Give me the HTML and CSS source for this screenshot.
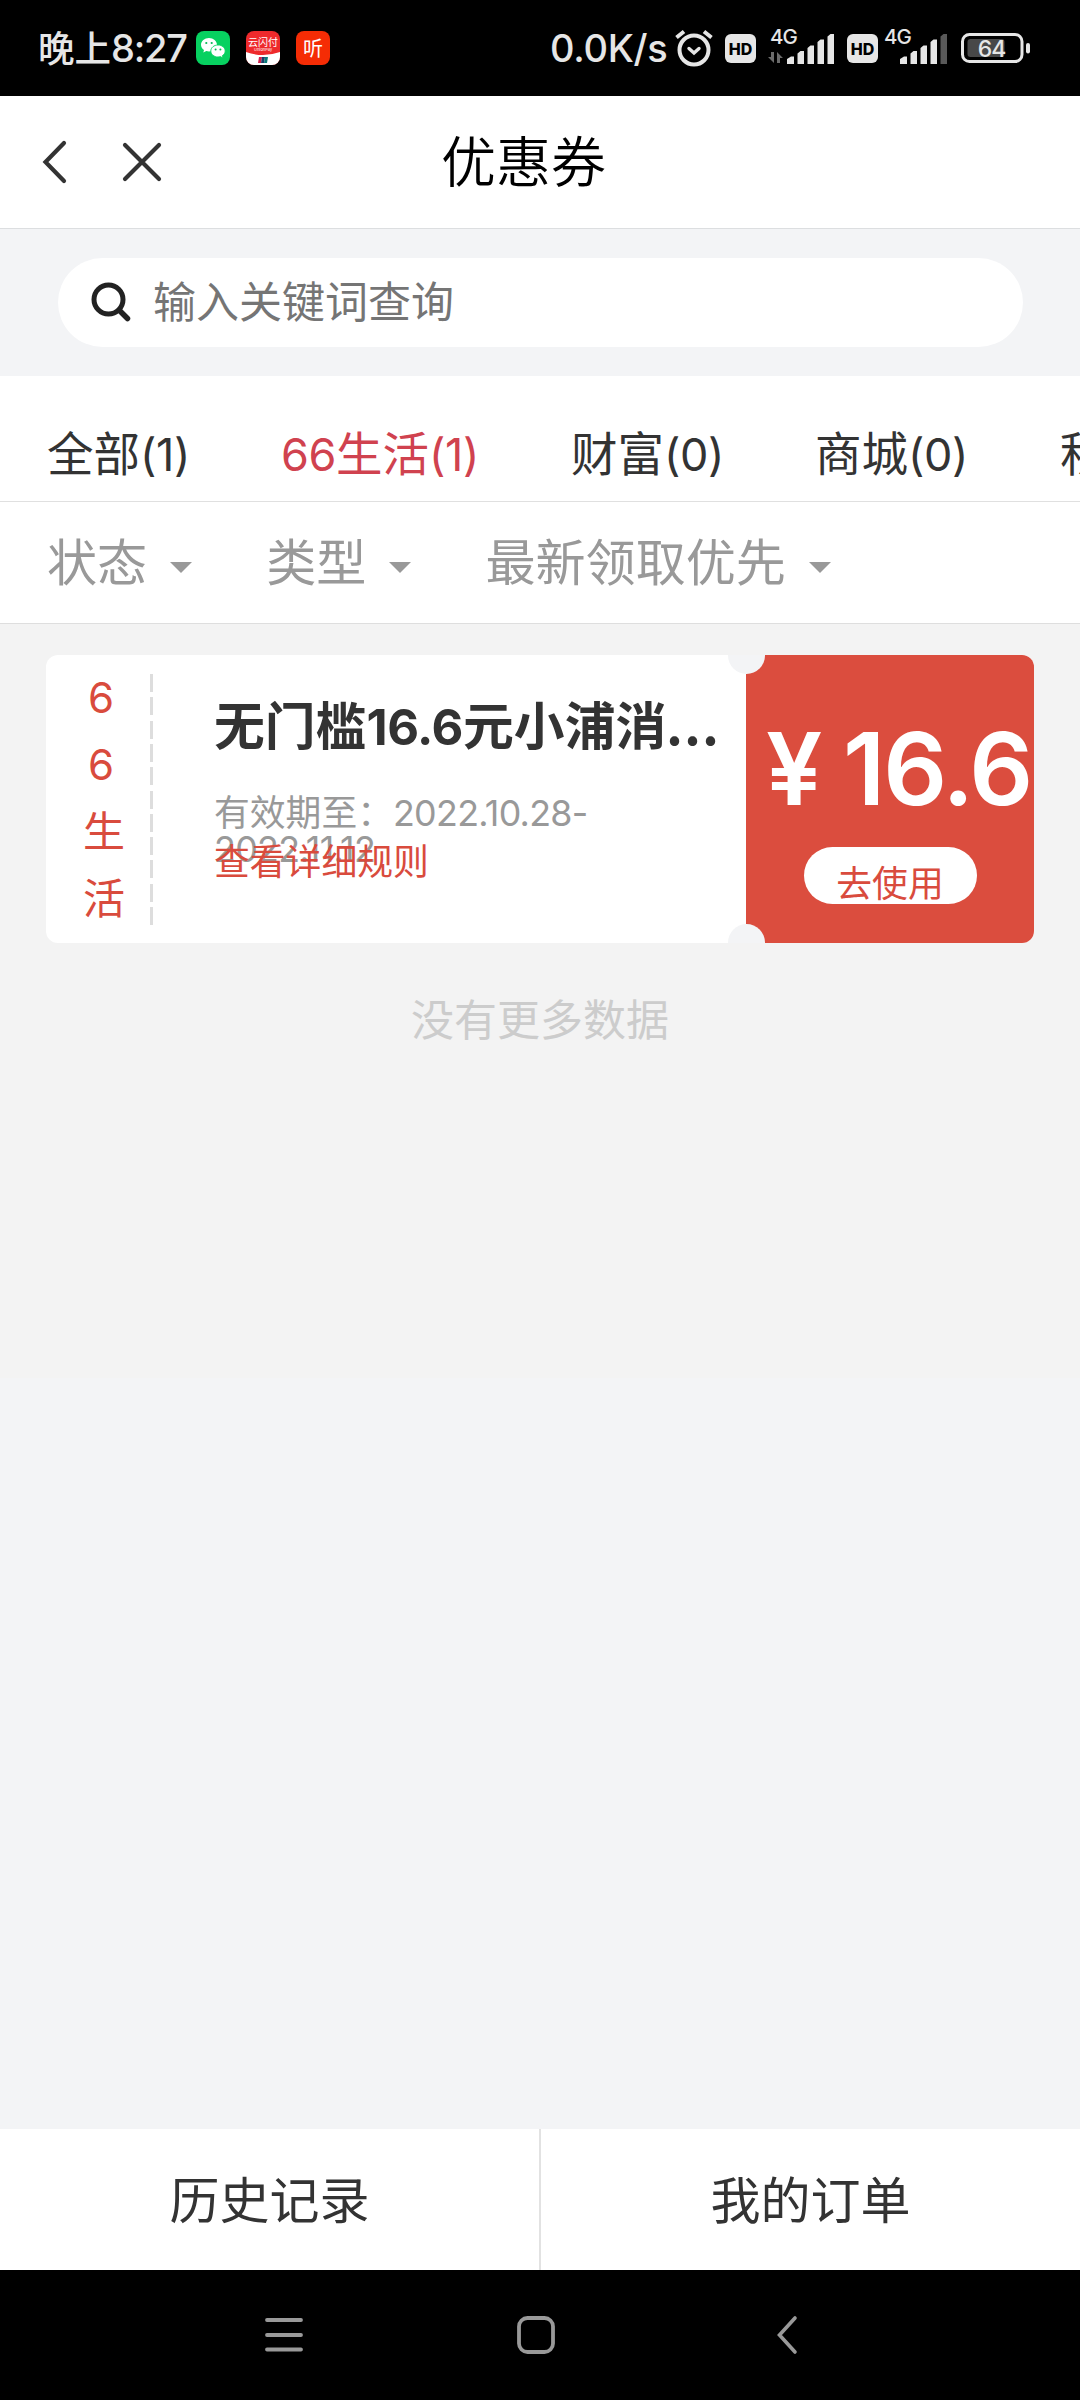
FILE: index.html
```html
<!DOCTYPE html>
<html lang="zh-CN">
<head>
<meta charset="utf-8">
<title>优惠券</title>
<link rel="stylesheet" href="styles.css">
</head>
<body>
<div class="screen">
  <div class="status">
    <span class="clock">晚上<span class="clock-num">8:27</span></span>
    <svg class="app-wechat" width="34" height="34" viewBox="0 0 34 34">
      <rect width="34" height="34" rx="8" fill="#07d160"/>
      <path d="M13 7C8.500 7 5 10 5 13.800c0 2.100 1.200 4 3 5.200l-.7 2.600 3-1.500c.9.200 1.800.4 2.700.4 4.400 0 8-3 8-6.700S17.400 7 13 7z" fill="#fff"/>
      <path d="M22 14c-4 0-7.200 2.700-7.200 6s3.200 6 7.200 6c.8 0 1.600-.1 2.400-.4l2.600 1.400-.6-2.400c1.700-1.100 2.800-2.700 2.800-4.600 0-3.300-3.200-6-7.200-6z" fill="#fff" stroke="#07d160" stroke-width=".9"/>
      <circle cx="10.300" cy="12" r="1.100" fill="#07b955"/><circle cx="15.700" cy="12" r="1.100" fill="#07b955"/>
      <circle cx="19.600" cy="18.500" r="1" fill="#07b955"/><circle cx="24.400" cy="18.500" r="1" fill="#07b955"/>
    </svg>
    <span class="app-pay"><span class="pay-name">云闪付</span><span class="pay-sub">UnionPay</span>
      <svg class="pay-base" width="34" height="13" viewBox="0 0 34 13"><path d="M0 0q17 6 34 0v13H0z" fill="#fff"/><path d="M13 5h3l-1 6h-3z" fill="#d3224c"/><path d="M16 5h3l-1 6h-3z" fill="#1c3d68"/><path d="M19 5h3l-1 6h-3z" fill="#087a79"/></svg>
    </span>
    <span class="app-listen">听</span>
    <span class="speed">0.0K/s</span>
    <svg class="alarm" width="40" height="38" viewBox="0 0 40 38" fill="none" stroke="#e6e6e6" stroke-linecap="round">
      <circle cx="20" cy="21" r="14.500" stroke-width="4"/>
      <path d="M15 19.500l5 4.500 5-4.500" stroke-width="3.400"/>
      <path d="M2.500 8.500l7.500-6M37.500 8.500l-7.500-6" stroke-width="4" stroke-linecap="butt"/>
    </svg>
    <span class="hd hd-one">HD</span>
    <svg class="signal signal-one" width="66" height="38" viewBox="0 0 66 38">
      <text x="1" y="16" class="net">4G</text>
      <path d="M5 24v11L-1 29h3v-5zM8 35V24l6 6h-3v5z" fill="#6b6b6b"/>
      <g fill="#e6e6e6"><path d="M18 31l4-2.500h3V36h-7zM28.500 25.500l3-2.500h3.500v13h-6.500zM38.500 20l3-2.500h3.500V36h-6.500zM48.500 14l3-2.500h3.500V36h-6.500zM58.500 8.500l3-2.500H65v30h-6.500z"/></g>
    </svg>
    <span class="hd hd-two">HD</span>
    <svg class="signal" width="66" height="38" viewBox="0 0 66 38">
      <text x="0" y="16" class="net">4G</text>
      <g fill="#e6e6e6"><path d="M16 31l4-2.500h3V36h-7zM26.500 25.500l3-2.500h3.500v13h-6.500zM36.500 20l3-2.500h3.500V36h-6.500zM46.500 14l3-2.500h3.500V36h-6.500z"/></g>
      <path d="M56.500 8.500l3-2.500H63v30h-6.500z" fill="#595959"/>
    </svg>
    <svg class="battery" width="70" height="30" viewBox="0 0 70 30">
      <rect x="1.500" y="1.500" width="59.500" height="27" rx="7" fill="none" stroke="#e6e6e6" stroke-width="3"/>
      <rect x="6.500" y="6" width="37" height="18" rx="3" fill="#484848"/>
      <rect x="65" y="10" width="4" height="10.500" rx="2" fill="#e6e6e6"/>
      <text x="30.500" y="23.500" text-anchor="middle" class="level">64</text>
    </svg>
  </div>

  <header class="header">
    <svg class="back" width="26" height="44" viewBox="0 0 26 44"><path d="M22 3L3.500 22 22 41" fill="none" stroke="#333" stroke-width="4.200" stroke-linecap="round"/></svg>
    <svg class="close" width="40" height="40" viewBox="0 0 40 40"><path d="M3 3l34 34M37 3L3 37" fill="none" stroke="#333" stroke-width="4.200" stroke-linecap="round"/></svg>
    <h1 class="title">优惠券</h1>
  </header>

  <div class="search-area">
    <div class="search">
      <svg width="40" height="40" viewBox="0 0 40 40" fill="none" stroke="#222" stroke-linecap="round"><circle cx="17.500" cy="16.500" r="14.500" stroke-width="5"/><path d="M28.500 27.500l8 8" stroke-width="5.500"/></svg>
      <span class="search-hint">输入关键词查询</span>
    </div>
  </div>

  <nav class="tabs">
    <span class="tab tab-all">全部<b>(1)</b></span>
    <span class="tab tab-life"><b>66</b>生活<b>(1)</b></span>
    <span class="tab tab-wealth">财富<b>(0)</b></span>
    <span class="tab tab-mall">商城<b>(0)</b></span>
    <span class="tab">积分<b>(0)</b></span>
  </nav>

  <div class="filters">
    <span class="filter">状态<i class="caret"></i></span>
    <span class="filter">类型<i class="caret"></i></span>
    <span class="filter">最新领取优先<i class="caret"></i></span>
  </div>

  <main class="list">
    <article class="coupon">
      <div class="brand"><span class="num">6</span><span class="num">6</span><span class="han">生</span><span>活</span></div>
      <div class="dashes"></div>
      <div class="info">
        <h2 class="name">无门槛<span class="name-num">16.6</span>元小浦消<span class="dots">...</span></h2>
        <p class="date">有效期至：<span class="date-num">2022.10.28-<br>2022.11.12</span></p>
        <a class="rules">查看详细规则</a>
      </div>
      <div class="value">
        <div class="price"><span class="yen">¥</span><span>16.6</span></div>
        <span class="use">去使用</span>
      </div>
      <i class="notch notch-top"></i>
      <i class="notch notch-bottom"></i>
    </article>
    <p class="end">没有更多数据</p>
  </main>
  <div class="rest"></div>

  <footer class="actions">
    <span class="action">历史记录</span>
    <span class="action">我的订单</span>
  </footer>

  <div class="sysnav">
    <svg width="38" height="36" viewBox="0 0 38 36"><path d="M2 3h34M2 18h34M2 32.500h34" stroke="#999" stroke-width="3.800" stroke-linecap="round"/></svg>
    <svg width="38" height="38" viewBox="0 0 38 38"><rect x="2" y="2" width="34" height="34" rx="8.500" fill="none" stroke="#999" stroke-width="3.800"/></svg>
    <svg width="20" height="38" viewBox="0 0 20 38"><path d="M18 2L2.500 19 18 36" fill="none" stroke="#999" stroke-width="3.600" stroke-linecap="round"/></svg>
  </div>
</div>
</body>
</html>
```
FILE: styles.css
```css
* { box-sizing: border-box; }
body, h1, h2, p { margin: 0; font-weight: 400; }
b, i { font-weight: inherit; font-style: normal; }
svg { display: block; flex: none; overflow: visible; }

body {
  background: #f3f4f6;
  color: #333;
  font-family: "Noto Sans CJK SC", sans-serif;
}
.screen {
  width: 1080px;
  height: 2400px;
  display: flex;
  flex-direction: column;
  overflow: hidden;
}
.screen > * { flex: none; }

/* status bar */
.status {
  height: 96px;
  padding-left: 38px;
  background: #000;
  color: #e6e6e6;
  display: flex;
  align-items: center;
  white-space: nowrap;
}
.clock { width: 158px; font-size: 36.5px; font-weight: 500; line-height: 60px; margin-top: -1px; }
.clock-num { font-family: Inter, sans-serif; font-size: 38px; letter-spacing: -1.2px; }
.app-wechat { margin-right: 16px; }
.app-pay, .app-listen {
  width: 34px;
  height: 34px;
  border-radius: 8px;
  overflow: hidden;
  color: #fff;
  flex: none;
}
.app-pay { background: #ee2a2c; display: flex; flex-direction: column; align-items: center; margin-right: 16px; }
.pay-name { font-size: 10px; line-height: 11px; margin-top: 5px; }
.pay-sub { font-size: 4px; line-height: 5px; }
.app-listen { background: #f52c05; font-size: 20px; line-height: 33px; text-align: center; margin-right: 220px; }
.speed { width: 124px; font-family: Inter, sans-serif; font-size: 38px; font-weight: 450; letter-spacing: -0.3px; }
.alarm { margin-right: 11px; }
.hd {
  width: 31px;
  height: 29px;
  border-radius: 6px;
  background: #e6e6e6;
  color: #000;
  font: 800 16px/30px Inter, sans-serif;
  text-align: center;
  flex: none;
}
.hd-one { margin-right: 13px; }
.hd-two { margin-right: 6px; }
.signal { margin-top: -2px; }
.signal-one { margin-right: 12px; }
.net { font: 500 20.500px Inter, sans-serif; fill: #e6e6e6; letter-spacing: -1px; }
.battery { margin-left: 11px; }
.level { font: 500 23px Inter, sans-serif; fill: #e6e6e6; letter-spacing: -1px; }

/* page header */
.header {
  height: 133px;
  padding-left: 42px;
  background: #fff;
  border-bottom: 1px solid #dcdee0;
  display: flex;
  align-items: center;
}
.close { margin-left: 54px; }
.title { margin: -9px 0 0 279px; font-size: 55px; line-height: 80px; color: #000; font-weight: 350; }

.search-area { height: 147px; padding: 29px 57px 0 58px; }
.search {
  height: 89px;
  padding-left: 33px;
  border-radius: 45px;
  background: #fff;
  display: flex;
  align-items: center;
  gap: 22px;
}
.search-hint { margin-top: -8px; font-size: 43px; line-height: 60px; color: #757575; }

/* category tabs */
.tabs {
  height: 126px;
  padding: 40px 0 0 47px;
  background: #fff;
  border-bottom: 1px solid #e0e0e0;
  display: flex;
  overflow: hidden;
  white-space: nowrap;
}
.tab { flex: none; font-size: 46.5px; line-height: 70px; }
.tab b { font-family: Inter, sans-serif; font-size: 45px; letter-spacing: -0.4px; }
.tab-all { width: 234px; }
.tab-life { width: 290px; color: #d0424f; }
.tab-wealth { width: 244px; }
.tab-mall { width: 245px; }

.filters {
  height: 122px;
  padding: 0 0 8px 47px;
  background: #fff;
  border-bottom: 1px solid #dedede;
  display: flex;
  align-items: center;
  gap: 74px;
  color: #999;
  font-size: 50.1px;
  line-height: 70px;
}
.filter { display: flex; align-items: center; }
.caret {
  margin: 18px 0 0 23px;
  border: 11px solid transparent;
  border-top-color: #999;
  border-bottom: 0;
}

/* coupon list */
.list { height: 754px; padding: 31px 46px 0; background: #f3f3f3; }
.coupon {
  position: relative;
  height: 288px;
  border-radius: 12px;
  background: #fff;
  display: flex;
  overflow: hidden;
}
.brand {
  width: 104px;
  padding: 9px 0 0 37px;
  display: flex;
  flex-direction: column;
  color: #d94b3d;
  font-size: 42px;
  line-height: 67.3px;
}
.brand .num { font-family: Inter, sans-serif; padding-left: 5px; }
.brand .han { margin-top: -4px; }
.dashes {
  width: 3px;
  height: 251px;
  margin-top: 19px;
  background: repeating-linear-gradient(#ddd 0 18px, transparent 18px 23.3px);
}
.info { width: 593px; padding: 32px 0 0 61px; white-space: nowrap; }
.name { font-size: 50.8px; line-height: 72px; font-weight: 700; }
.name-num { font-family: Inter, sans-serif; font-size: 49px; letter-spacing: -0.4px; }
.dots { letter-spacing: 1.5px; }
.date { margin-top: 28px; font-size: 35.8px; line-height: 36px; color: #999; }
.date-num { font-family: Inter, sans-serif; line-height: 0; letter-spacing: -0.7px; }
.rules { display: block; margin-top: -23px; font-size: 35.8px; line-height: 36px; color: #d94b3d; position: relative; }
.value {
  width: 288px;
  padding-top: 54px;
  background: #db4d3e;
  display: flex;
  flex-direction: column;
  align-items: center;
}
.price {
  align-self: stretch;
  padding-left: 20px;
  color: #fff;
  font: 600 100px/120px Inter, sans-serif;
  letter-spacing: -2px;
  white-space: nowrap;
}
.yen { display: inline-block; width: 77px; }
.use {
  width: 173px;
  height: 57px;
  margin-top: 18px;
  border-radius: 29px;
  background: #fff;
  color: #d94b3d;
  font-size: 35.8px;
  line-height: 69px;
  text-align: center;
}
.notch {
  position: absolute;
  left: 682px;
  width: 37px;
  height: 37px;
  border-radius: 50%;
  background: #f3f4f6;
}
.notch-top { top: -18px; }
.notch-bottom { bottom: -18px; }
.end { margin-top: 41px; text-align: center; font-size: 43px; line-height: 66px; color: #ccc; }
.rest { height: 751px; }

/* bottom actions */
.actions { height: 141px; background: #fff; display: flex; }
.action { flex: 1; text-align: center; font-size: 50px; line-height: 136px; }
.action + .action { border-left: 2px solid #e2e2e2; }

.sysnav {
  height: 130px;
  padding-left: 265px;
  background: #000;
  display: flex;
  align-items: center;
  gap: 214px;
}
.sysnav svg:last-child { margin-left: 8px; }
```
